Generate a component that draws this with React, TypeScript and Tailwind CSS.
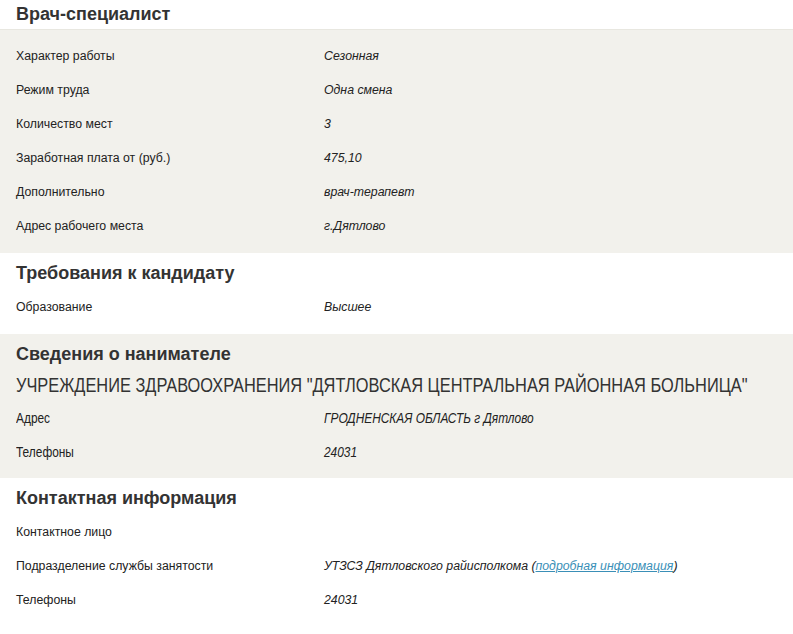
const rowsMain = [
  ['Характер работы', 'Сезонная'],
  ['Режим труда', 'Одна смена'],
  ['Количество мест', '3'],
  ['Заработная плата от (руб.)', '475,10'],
  ['Дополнительно', 'врач-терапевт'],
  ['Адрес рабочего места', 'г.Дятлово'],
]

function Row({ label, value, narrow }: { label: string; value: React.ReactNode; narrow?: boolean }) {
  // narrow rows imitate Arial Narrow by squeezing Liberation Sans
  const cell = narrow ? 'origin-left scale-x-[0.85] text-[14px] whitespace-nowrap' : 'text-[12.3px]'
  return (
    <div className="flex h-[34px] items-center text-[#222]">
      <div className="w-[324px] shrink-0 pl-4">
        <div className={cell}>{label}</div>
      </div>
      <div className={`italic ${cell}`}>{value}</div>
    </div>
  )
}

function Heading({ children }: { children: React.ReactNode }) {
  return <h2 className="h-6 px-4 text-[18px] font-bold leading-6 text-[#333]">{children}</h2>
}

export default function App() {
  return (
    <div className="h-[634px] w-[793px] overflow-hidden bg-white font-[family-name:Liberation_Sans,Arial,sans-serif]">
      {/* Вакансия */}
      <div className="h-[29px] pt-[2px]">
        <Heading>Врач-специалист</Heading>
      </div>
      <div className="border-t border-[#e8e7e0] bg-[#f2f1ec] pt-[9px] pb-[10px]">
        {rowsMain.map(([l, v]) => (
          <Row key={l} label={l} value={v} />
        ))}
      </div>

      {/* Требования */}
      <div className="bg-white pt-2 pb-[10px]">
        <Heading>Требования к кандидату</Heading>
        <div className="pt-[5px]">
          <Row label="Образование" value="Высшее" />
        </div>
      </div>

      {/* Наниматель */}
      <div className="bg-[#f2f1ec] pt-2 pb-[9px]">
        <Heading>Сведения о нанимателе</Heading>
        <div className="mt-1 h-[31px] px-4 leading-[31px]">
          <div className="origin-left scale-x-[0.84] whitespace-nowrap text-[19.5px] text-[#333]">
            УЧРЕЖДЕНИЕ ЗДРАВООХРАНЕНИЯ "ДЯТЛОВСКАЯ ЦЕНТРАЛЬНАЯ РАЙОННАЯ БОЛЬНИЦА"
          </div>
        </div>
        <Row narrow label="Адрес" value="ГРОДНЕНСКАЯ ОБЛАСТЬ г Дятлово" />
        <Row narrow label="Телефоны" value="24031" />
      </div>

      {/* Контакты */}
      <div className="bg-white pt-2 pb-[9px]">
        <Heading>Контактная информация</Heading>
        <div className="pt-[5px]">
          <Row label="Контактное лицо" value="" />
          <Row
            label="Подразделение службы занятости"
            value={
              <>
                УТЗСЗ Дятловского райисполкома (
                <a href="#" className="text-[#3a8fb7] underline">
                  подробная информация
                </a>
                )
              </>
            }
          />
          <Row label="Телефоны" value="24031" />
        </div>
      </div>
    </div>
  )
}
